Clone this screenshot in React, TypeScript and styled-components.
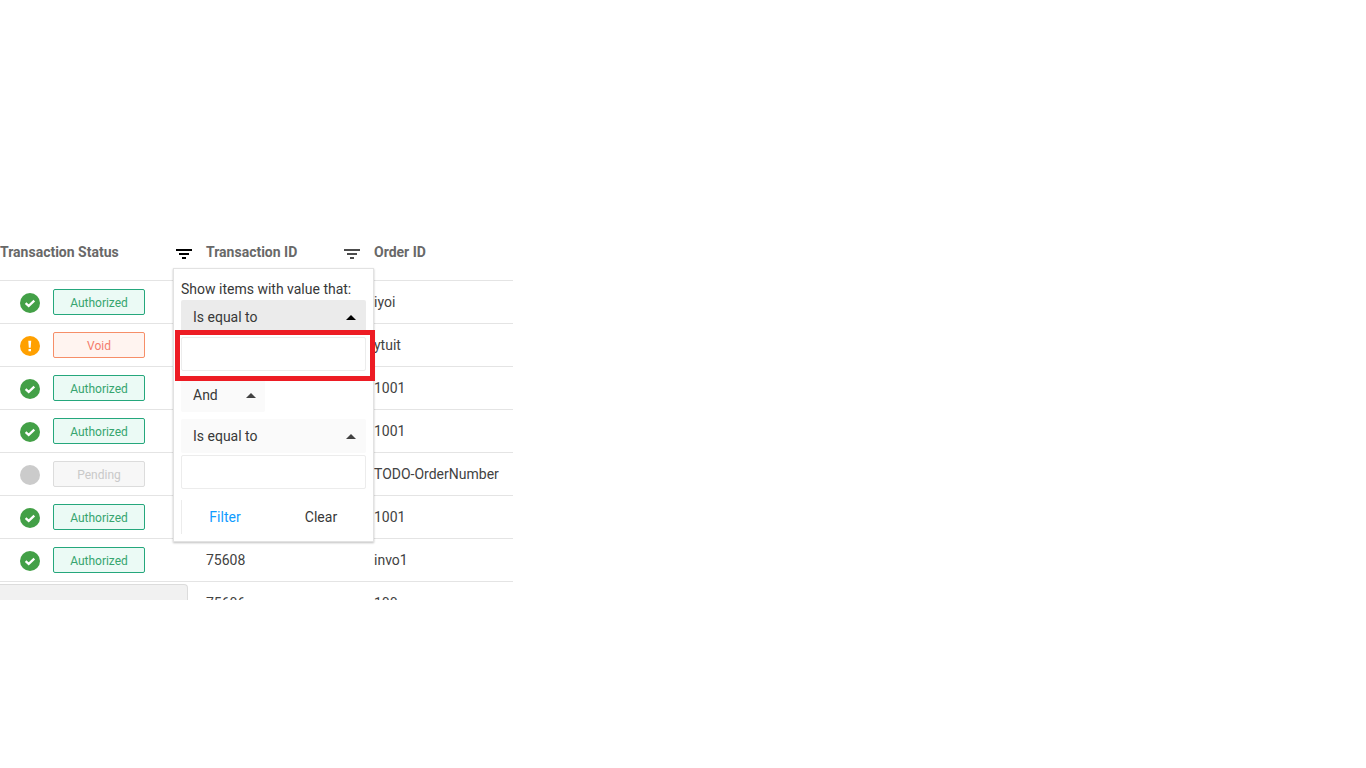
import React from "react";
import styled, { createGlobalStyle, css } from "styled-components";

const GlobalStyle = createGlobalStyle`
  *, *::before, *::after { box-sizing: border-box; }
  body {
    margin: 0;
    background: #ffffff;
    color: #424242;
    font-family: Roboto, "Liberation Sans", sans-serif;
    font-size: 14px;
    line-height: 20px;
  }
  button, input, select { font: inherit; color: inherit; }
`;

const Page = styled.main`
  padding-top: 224px;
`;

const GridViewport = styled.section`
  position: relative;
  max-width: 513px;
  height: 376px;
  overflow: hidden;
`;

const Grid = styled.table`
  width: 100%;
  table-layout: fixed;
  border-collapse: separate;
  border-spacing: 0;
`;

const Column = styled.col<{ $width?: number }>`
  width: ${({ $width }) => ($width ? `${$width}px` : "auto")};
`;

const HeaderCell = styled.th`
  height: 57px;
  padding: 0;
  border-bottom: 1px solid #e4e4e4;
  color: #686868;
  font-weight: 700;
  text-align: left;
`;

const HeaderContent = styled.div`
  display: flex;
  align-items: center;
  justify-content: space-between;
  padding-right: 14px;
`;

const FilterToggle = styled.button<{ $active?: boolean }>`
  display: flex;
  width: 16px;
  height: 16px;
  padding: 5px 0 0;
  border: 0;
  background: none;
  color: ${({ $active }) => ($active ? "#000000" : "#4c4c4c")};
`;

const Cell = styled.td`
  height: 43px;
  padding: 0;
  border-bottom: 1px solid #e4e4e4;
  white-space: nowrap;
`;

const StatusContent = styled.div`
  display: flex;
  align-items: center;
  gap: 13px;
  padding-left: 20px;
`;

const StatusIcon = styled.svg`
  width: 20px;
  height: 20px;
  margin-top: 2px;
`;

type Status = "Authorized" | "Void" | "Pending";

const badgeColors = {
  Authorized: css`
    color: #36a56f;
    background: #ebfaf5;
    border-color: #25a77c;
  `,
  Void: css`
    color: #f47c6c;
    background: #fff4f0;
    border-color: #f68e68;
  `,
  Pending: css`
    color: #c9c9c9;
    background: #f7f7f7;
    border-color: #dcdcdc;
  `,
};

const Badge = styled.span<{ $status: Status }>`
  width: 92px;
  height: 26px;
  border: 1px solid;
  border-radius: 2px;
  font-size: 12px;
  line-height: 26px;
  text-align: center;
  ${({ $status }) => badgeColors[$status]}
`;

const FilterPopup = styled.form`
  position: absolute;
  top: 44px;
  left: 173px;
  width: 201px;
  padding: 10px 7px 7px;
  border: 1px solid #e2e2e2;
  background: #ffffff;
  box-shadow: 0 1px 2px rgba(0, 0, 0, 0.25);
  color: #383838;
`;

const PopupTitle = styled.div`
  height: 21px;
  white-space: nowrap;
`;

const SelectBox = styled.div<{ $open?: boolean; $compact?: boolean }>`
  display: flex;
  align-items: center;
  position: relative;
  width: ${({ $compact }) => ($compact ? "84px" : "100%")};
  height: 34px;
  border-radius: 2px;
  background: ${({ $open }) => ($open ? "#ebebeb" : "#fafafa")};
  color: ${({ $open }) => ($open ? "#000000" : "#424242")};
`;

const Select = styled.select`
  width: 100%;
  height: 34px;
  padding: 0 24px 0 12px;
  border: 0;
  outline: 0;
  appearance: none;
  background: transparent;
  color: #383838;
`;

const Caret = styled.svg<{ $compact?: boolean }>`
  position: absolute;
  right: ${({ $compact }) => ($compact ? "9px" : "10px")};
  width: 10px;
  height: 5px;
  pointer-events: none;
`;

const InputWrap = styled.div<{ $highlighted?: boolean }>`
  position: relative;
  z-index: ${({ $highlighted }) => ($highlighted ? 1 : 0)};
  display: flex;
  margin: ${({ $highlighted }) => ($highlighted ? "3px" : "2px")} 0 7px;
`;

const TextInput = styled.input`
  width: 100%;
  height: 34px;
  padding: 0 12px;
  border: 1px solid #ececec;
  border-radius: 2px;
  outline: 0;
  background: #ffffff;
`;

const Highlight = styled.span`
  position: absolute;
  inset: -7px -9px -10px -6px;
  border: 5px solid #ed1c24;
  pointer-events: none;
`;

const LogicRow = styled.div`
  margin-bottom: 7px;
`;

const Actions = styled.div`
  display: grid;
  grid-template-columns: 86px 1fr;
  gap: 8px;
  margin-top: 11px;
  border-left: 1px solid #ececec;
`;

const ActionButton = styled.button<{ $primary?: boolean }>`
  height: 34px;
  padding: 0;
  border: 0;
  background: transparent;
  color: ${({ $primary }) => ($primary ? "#109cff" : "#383838")};
`;

const BottomPanel = styled.div`
  position: absolute;
  bottom: 0;
  left: 0;
  width: 188px;
  height: 16px;
  border: 1px solid #dcdcdc;
  border-width: 1px 1px 0 0;
  border-top-right-radius: 4px;
  background: #f1f1f1;
`;

interface Row {
  status: Status;
  transactionId: string;
  orderId: string;
}

const rows: Row[] = [
  { status: "Authorized", transactionId: "", orderId: "iyoi" },
  { status: "Void", transactionId: "", orderId: "ytuit" },
  { status: "Authorized", transactionId: "", orderId: "1001" },
  { status: "Authorized", transactionId: "", orderId: "1001" },
  { status: "Pending", transactionId: "", orderId: "TODO-OrderNumber" },
  { status: "Authorized", transactionId: "", orderId: "1001" },
  { status: "Authorized", transactionId: "75608", orderId: "invo1" },
];

function StatusMark({ status }: { status: Status }) {
  const fill = { Authorized: "#43a047", Void: "#ffa000", Pending: "#cbcbcb" }[status];
  return (
    <StatusIcon viewBox="0 0 20 20" aria-hidden="true">
      <circle cx="10" cy="10" r="10" fill={fill} />
      {status === "Authorized" && (
        <path d="M5.6 10.1l3.1 2.8 5.6-5.3" fill="none" stroke="#fff" strokeWidth="2.2" />
      )}
      {status === "Void" && (
        <path d="M8.3 4.8h2.9l-.5 7H8.8zM8.5 13h2.5v2.3H8.5z" fill="#fff" />
      )}
    </StatusIcon>
  );
}

function FilterButton({ label, active }: { label: string; active?: boolean }) {
  return (
    <FilterToggle type="button" aria-label={label} $active={active}>
      <svg width="16" height="10" viewBox="0 0 16 10" shapeRendering="crispEdges" aria-hidden="true">
        <path d="M0 0h16v2H0zM3 4h10v2H3zM6 8h4v2H6z" fill="currentColor" />
      </svg>
    </FilterToggle>
  );
}

function Dropdown({ label, value, open, compact }: { label: string; value: string; open?: boolean; compact?: boolean }) {
  return (
    <SelectBox $open={open} $compact={compact}>
      <Select aria-label={label} defaultValue={value}>
        <option>{value}</option>
      </Select>
      <Caret $compact={compact} viewBox="0 0 10 5" aria-hidden="true">
        <path d="M0 5l5-5 5 5z" fill="currentColor" />
      </Caret>
    </SelectBox>
  );
}

export default function App() {
  return (
    <Page>
      <GlobalStyle />
      <GridViewport>
        <Grid>
          <colgroup>
            <Column $width={206} />
            <Column $width={168} />
            <Column />
          </colgroup>
          <thead>
            <tr>
              <HeaderCell scope="col">
                <HeaderContent>
                  Transaction Status
                  <FilterButton label="Filter by transaction status" active />
                </HeaderContent>
              </HeaderCell>
              <HeaderCell scope="col">
                <HeaderContent>
                  Transaction ID
                  <FilterButton label="Filter by transaction ID" />
                </HeaderContent>
              </HeaderCell>
              <HeaderCell scope="col">Order ID</HeaderCell>
            </tr>
          </thead>
          <tbody>
            {rows.map((row, index) => (
              <tr key={index}>
                <Cell>
                  <StatusContent>
                    <StatusMark status={row.status} />
                    <Badge $status={row.status}>{row.status}</Badge>
                  </StatusContent>
                </Cell>
                <Cell>{row.transactionId}</Cell>
                <Cell>{row.orderId}</Cell>
              </tr>
            ))}
            <tr>
              <Cell />
              <Cell>75606</Cell>
              <Cell>100</Cell>
            </tr>
          </tbody>
        </Grid>

        <FilterPopup onSubmit={(event) => event.preventDefault()}>
          <PopupTitle>Show items with value that:</PopupTitle>
          <Dropdown label="First condition" value="Is equal to" open />
          <InputWrap $highlighted>
            <TextInput type="text" aria-label="First value" />
            <Highlight />
          </InputWrap>
          <LogicRow>
            <Dropdown label="Combine conditions" value="And" compact />
          </LogicRow>
          <Dropdown label="Second condition" value="Is equal to" />
          <InputWrap>
            <TextInput type="text" aria-label="Second value" />
          </InputWrap>
          <Actions>
            <ActionButton type="submit" $primary>Filter</ActionButton>
            <ActionButton type="reset">Clear</ActionButton>
          </Actions>
        </FilterPopup>

        <BottomPanel />
      </GridViewport>
    </Page>
  );
}
